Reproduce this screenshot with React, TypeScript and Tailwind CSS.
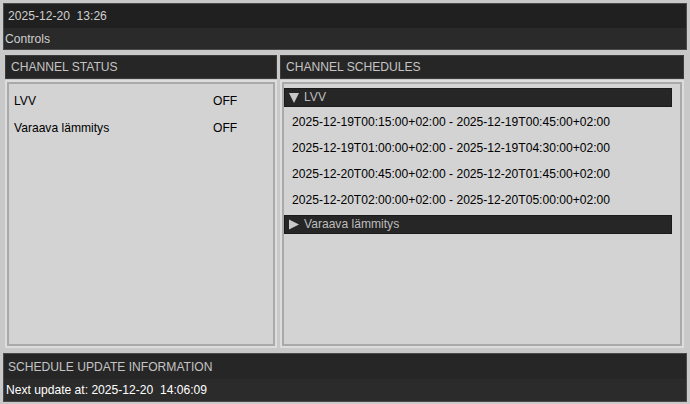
import React from "react";

const schedules = [
  "2025-12-19T00:15:00+02:00 - 2025-12-19T00:45:00+02:00",
  "2025-12-19T01:00:00+02:00 - 2025-12-19T04:30:00+02:00",
  "2025-12-20T00:45:00+02:00 - 2025-12-20T01:45:00+02:00",
  "2025-12-20T02:00:00+02:00 - 2025-12-20T05:00:00+02:00",
];

const channels = [
  { name: "LVV", state: "OFF" },
  { name: "Varaava lämmitys", state: "OFF" },
];

function SectionHeader({ title }: { title: string }) {
  return (
    <div className="h-[24px] flex items-center pl-[5px] pt-[1px] bg-[#262626] border border-[#3c3c3c] text-[#c4c4c4]">
      {title}
    </div>
  );
}

function Panel({ children }: { children: React.ReactNode }) {
  return (
    <div className="mt-[1px] flex-1 border-2 border-[#dddddd]">
      <div className="h-full border-2 border-[#a9a9a9] bg-[#d3d3d3]">{children}</div>
    </div>
  );
}

function GroupBar({ title, open }: { title: string; open: boolean }) {
  return (
    <div className="h-[19px] flex items-center gap-[5px] pl-[4px] bg-[#262626] border border-[#1a1a1a] text-[#bdbdbd]">
      <svg width="10" height="11" viewBox="0 0 10 11" className="shrink-0">
        {open ? (
          <path d="M0 1 L10 1 L5 11 Z" fill="#c8c8c8" />
        ) : (
          <path d="M0 0.5 L10 5.5 L0 10.5 Z" fill="#c8c8c8" />
        )}
      </svg>
      <span>{title}</span>
    </div>
  );
}

export default function App() {
  return (
    <div className="h-[404px] w-[690px] overflow-hidden bg-[#c9c9c9] p-[3px] pb-[2px] flex flex-col text-[12.1px] leading-none font-['Liberation_Sans',Arial,sans-serif]">
      {/* Top bar */}
      <div className="h-[47px] flex flex-col border border-[#4a4a4a]">
        <div className="h-[24px] flex items-center pl-[4px] bg-[#202020] text-[#cfcfcf] whitespace-pre">
          2025-12-20  13:26
        </div>
        <div className="flex-1 flex items-center pl-[1px] pt-[1px] bg-[#2a2a2a] text-[#cfcfcf]">
          Controls
        </div>
      </div>

      {/* Columns */}
      <div className="mt-[5px] flex-1 flex gap-[3px] ml-[2px] mr-[3px]">
        <div className="w-[272px] flex flex-col">
          <SectionHeader title="CHANNEL STATUS" />
          <Panel>
            <div className="pt-[4px] pl-[5px] text-black">
              {channels.map((c) => (
                <div key={c.name} className="h-[27px] flex items-center">
                  <span className="w-[199px]">{c.name}</span>
                  <span>{c.state}</span>
                </div>
              ))}
            </div>
          </Panel>
        </div>

        <div className="flex-1 flex flex-col">
          <SectionHeader title="CHANNEL SCHEDULES" />
          <Panel>
            <div className="pt-[4px] pr-[8px] text-black">
              <GroupBar title="LVV" open />
              <div className="mt-[2px]">
                {schedules.map((s) => (
                  <div key={s} className="h-[26px] flex items-center pl-[8px]">
                    {s}
                  </div>
                ))}
              </div>
              <div className="mt-[2px]">
                <GroupBar title="Varaava lämmitys" open={false} />
              </div>
            </div>
          </Panel>
        </div>
      </div>

      {/* Bottom info */}
      <div className="mt-[5px] h-[49px] flex flex-col border border-[#4a4a4a]">
        <div className="h-[25px] flex items-center pl-[4px] pt-[1px] bg-[#262626] text-[#c4c4c4]">
          SCHEDULE UPDATE INFORMATION
        </div>
        <div className="flex-1 flex items-center pl-[2px] bg-[#2b2b2b] text-white whitespace-pre">
          Next update at: 2025-12-20  14:06:09
        </div>
      </div>
    </div>
  );
}
